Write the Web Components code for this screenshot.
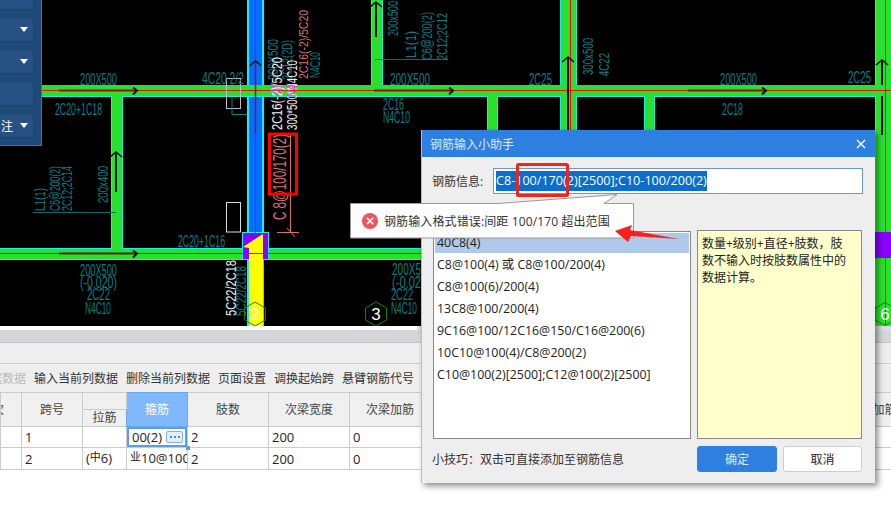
<!DOCTYPE html>
<html lang="zh">
<head>
<meta charset="utf-8">
<title>钢筋输入小助手</title>
<style>
html,body{margin:0;padding:0;background:#fff}
body{width:891px;height:511px;overflow:hidden;font:12px "Open Sans","Noto Sans CJK SC",sans-serif;color:#333}
app-shell{width:891px;height:511px}
</style>
</head>
<body>
<app-shell>
  <cad-canvas slot="canvas"></cad-canvas>
  <side-panel slot="canvas"></side-panel>
  <rebar-grid slot="grid"></rebar-grid>
  <rebar-dialog slot="over">
    <span slot="title">钢筋输入小助手</span>
    <hint-item selected>40C8(4)</hint-item>
    <hint-item>C8@100(4) 或 C8@100/200(4)</hint-item>
    <hint-item>C8@100(6)/200(4)</hint-item>
    <hint-item>13C8@100/200(4)</hint-item>
    <hint-item>9C16@100/12C16@150/C16@200(6)</hint-item>
    <hint-item>10C10@100(4)/C8@200(2)</hint-item>
    <hint-item>C10@100(2)[2500];C12@100(2)[2500]</hint-item>
    <span slot="note">数量+级别+直径+肢数，肢<br>数不输入时按肢数属性中的<br>数据计算。</span>
    <span slot="tip">小技巧：双击可直接添加至钢筋信息</span>
    <dlg-button slot="actions" primary>确定</dlg-button>
    <dlg-button slot="actions">取消</dlg-button>
  </rebar-dialog>
  <error-bubble slot="over">钢筋输入格式错误:间距 100/170 超出范围</error-bubble>
  <red-arrow slot="over"></red-arrow>
</app-shell>
<script>
const CJK='"Open Sans","Noto Sans CJK SC",sans-serif';
function def(name,html,init){
  customElements.define(name,class extends HTMLElement{
    constructor(){super();this.attachShadow({mode:'open'}).innerHTML=html;if(init)init(this.shadowRoot,this)}
  });
}
def('app-shell',`<style>
:host{display:block;position:relative;overflow:hidden}
.top{height:326px;position:relative;overflow:hidden;background:#000}
</style><div class="top"><slot name="canvas"></slot></div><slot name="grid"></slot><slot name="over"></slot>`);

/* ---------- CAD drawing ---------- */
def('cad-canvas',`<style>:host{display:block;width:891px;height:326px}svg{display:block}
text{font-family:"Liberation Sans",sans-serif}</style><svg width="891" height="326" viewBox="0 0 891 326"></svg>`,root=>{
  const G='#2ae02e',C='#14f0e6',TEAL='#0a7f86',WH='#f2f2f2',PK='#d87272',R='#ff0000';
  let s='';
  const rect=(x,y,w,h,f)=>s+=`<rect x="${x}" y="${y}" width="${w}" height="${h}" fill="${f}"/>`;
  const line=(a,b,c,d,col,w=1)=>s+=`<line x1="${a}" y1="${b}" x2="${c}" y2="${d}" stroke="${col}" stroke-width="${w}"/>`;
  const txt=(t,x,y,len,col=TEAL,fs=16)=>s+=`<text x="${x}" y="${y}" font-size="${fs}" fill="${col}" textLength="${len}" lengthAdjust="spacingAndGlyphs">${t}</text>`;
  const vtxt=(t,x,y,len,col=TEAL,fs=15)=>s+=`<text x="${x}" y="${y}" font-size="${fs}" fill="${col}" textLength="${len}" lengthAdjust="spacingAndGlyphs" transform="rotate(-90 ${x} ${y})">${t}</text>`;
  const chevR=(x,y)=>s+=`<polyline points="${x-4},${y-3} ${x},${y} ${x-4},${y+4}" fill="none" stroke="#111" stroke-width="2"/>`;
  const chevU=(x,y)=>s+=`<polyline points="${x-6},${y+5} ${x},${y} ${x+6},${y+5}" fill="none" stroke="#111" stroke-width="1.6"/>`;

  /* blue column */
  rect(247,0,17,233,C);rect(249,0,13,233,'#0a6cff');
  /* outlines first, then fills, so joints merge */
  const verts=[[111,90,12,165],[371,0,12,90],[487,90,11,60],[644,90,11,60],[560,0,17,150],[875,0,17,326]];
  const hor=[[41,85,850,12],[0,248,891,12]];
  verts.forEach(v=>rect(v[0],v[1],v[2],v[3],C));
  hor.forEach(h=>rect(h[0],h[1],h[2],h[3],C));
  verts.forEach(v=>rect(v[0]+1,v[1],v[2]-2,v[3],G));
  rect(41,85,850,11,G);rect(0,249,891,10,G);

  /* purple + yellow column heads */
  rect(242,232,27,27,C);rect(243,233,25,26,'#8a00ff');
  rect(875,232,16,26,'#8a00ff');
  rect(247,259,17,67,C);
  s+=`<polygon points="243,247 263,234 263,326 249,326 249,248" fill="#ffff00"/>`;

  /* red axes */
  line(0,253.5,891,253.5,'#e01010');line(41,90.5,891,90.5,'#e01010');
  line(255.5,0,255.5,236,'#e01010');line(570.5,0,570.5,140,R);line(885.5,0,885.5,326,R);
  /* direction arrows */
  line(59,90.5,135,90.5,'#a80808',2);chevR(137,90.5);
  line(59,253.5,135,253.5,'#5a2020',2);chevR(137,253.5);
  line(374,90.5,452,90.5,'#a80808',2);chevR(453,90.5);
  line(688,90.5,765,90.5,'#a80808',2);chevR(766,90.5);
  line(255.5,62,255.5,134,'#7a2030',1.5);chevU(255.5,61);
  line(116,153,116,192,'#111',2);chevU(116,152);
  line(376,2,376,37,'#111',2);chevU(376,2);
  line(568,58,568,140,'#111',2);chevU(568,57);
  line(882,61,882,85,'#111',2);line(882,96,882,135,'#111',2);chevU(882,60);

  /* boxes */
  s+=`<rect x="226.5" y="78.5" width="14" height="30" fill="none" stroke="#bbb"/><rect x="226.5" y="202.5" width="14" height="29.5" fill="none" stroke="#ddd"/>`;
  s+=`<polyline points="232,97 232,114.5 247,114.5" fill="none" stroke="${TEAL}"/>`;
  line(33,212.5,116,212.5,'#0a6a6e');line(375,59.5,448,59.5,'#0a6a6e');

  /* horizontal notes */
  txt('200X500',80,85,37);txt('4C20 2/2',202,84,42);txt('2C20+1C18',55,115,47);
  txt('2C16',383,110,21);txt('N4C10',383,123,27);
  txt('200X500',390,85,40);txt('2C25',529,85,23);
  txt('200X500',720,85,37);txt('2C18',722,115,21);txt('2C25',848,83,23);
  txt('200X500',80,276,37);txt('(-0.020)',80,288,37);txt('2C22',87,300,23);txt('N4C10',85,314,26);
  txt('2C20+1C16',178,247,47);
  txt('200X5',392,275,29);txt('(-0.02',392,288,29);txt('2C22',391,300,22);txt('N4C10',391,314,26);
  /* vertical notes */
  vtxt('200X500',278,80,41);vtxt('2C16(-2)/5C20',282,130,73,WH,14);vtxt('2C12(2D)',292,80,40);
  vtxt('300*500*N4C10',297,130,70,WH,14);vtxt('-2)',282,97,12,'#e040e0',14);vtxt('N4',297,97,12,'#e040e0',14);
  vtxt('2C16(-2)/5C20',308,79,69,PK,13);vtxt('N4C10',320,78,26);
  vtxt('200x500',398,36,35);vtxt('L1(1)',416,58,27);vtxt('C6@200(2)',432,60,48);vtxt('2C12;2C12',447,60,47);
  vtxt('300x500',593,75,37);vtxt('4C22',609,76,23);
  vtxt('200x400',108,203,37);vtxt('L1(1)',45,211,23);vtxt('C6@200(2)',60,211,45);vtxt('2C12;2C14',72,211,45);
  vtxt('5C22/2C18',236,316,56,WH,14);vtxt('5C22/2C18',246,316,50,TEAL,14);
  /* red-boxed stirrup note */
  vtxt('C 8@100/170(2)',286,220,86,PK,18);
  line(290.5,135,290.5,232,PK);line(277,232.5,299,232.5,PK);line(287,228,295,237,PK);
  s+=`<rect x="269.5" y="134" width="27" height="60" fill="none" stroke="#ff0000" stroke-width="3"/>`;
  /* axis markers */
  const hex=(cx,cy,r,col,n)=>{let p=[];for(let i=0;i<6;i++){const a=Math.PI/3*i-Math.PI/2;p.push((cx+r*Math.cos(a)).toFixed(1)+','+(cy+r*Math.sin(a)).toFixed(1))}
    s+=`<polygon points="${p.join(' ')}" fill="none" stroke="${col}"/>`;
    s+=`<text x="${cx}" y="${cy+6}" font-size="17" fill="#fff" text-anchor="middle">${n}</text>`};
  hex(255,314,12,'#0f8a0f','2');hex(376,314,12,'#0f8a0f','3');hex(885,314,11.5,'#0f8a0f','6');
  root.querySelector('svg').innerHTML=s;
});

/* ---------- floating left panel ---------- */
def('panel-row',`<style>
:host{display:flex;align-items:center;justify-content:flex-end;box-sizing:border-box;height:25px;width:34px;background:#265182;border:1px solid #1e4470;border-left:0;border-radius:0 4px 4px 0;color:#fff;font:12px ${CJK}}
.t{flex:1;padding-left:1px}
svg{margin-right:5px}
</style><span class="t"><slot></slot></span><svg width="8" height="5" viewBox="0 0 8 5"><polygon points="0,0 8,0 4,5" fill="#fff"/></svg>`);
def('side-panel',`<style>
:host{position:absolute;left:0;top:-15px;box-sizing:border-box;width:41.5px;height:161px;background:#1f4a78;border-right:1px solid #2e78c0;border-bottom:1px solid #2e78c0;display:flex;flex-direction:column;gap:7px}
</style><panel-row></panel-row><panel-row></panel-row><panel-row></panel-row><panel-row class="plain"></panel-row><panel-row>注</panel-row>`,root=>{
  root.querySelector('.plain').shadowRoot.querySelector('svg').style.display='none';
});

/* ---------- bottom grid ---------- */
def('rebar-grid',`<style>
:host{display:block;width:891px;overflow:hidden;font:12px ${CJK};color:#333}
.strip{height:4px;background:linear-gradient(to right,#fff 417px,#dcdde0 417px)}
.band{height:12px;background:#d4d6da;border-bottom:1px solid #c4c6ca}
.blank{height:20px;background:#eee;border-bottom:1px solid #ccc}
.tools{height:28px;background:#eee;display:flex;align-items:center;gap:8px;white-space:nowrap}
.tools .off{color:#bbb;width:26px;overflow:hidden;direction:rtl}
table{border-collapse:collapse;table-layout:fixed;width:914px}
th,td{border:1px solid #cbcbcb;padding:0;font-weight:400;overflow:hidden;white-space:nowrap;line-height:14px}
th{background:#f0f0f0;color:#444;text-align:center}
tr.h1 th{height:16px}tr.h2 th{height:16px}
td{height:20px;background:#fff;padding-left:3px;font-size:13px;color:#222;line-height:20px}
th.sel{background:#7fb8fb;color:#fff;border-color:#6aa8ef}
td.edit{box-shadow:inset 0 0 0 2px #5b9de8;position:relative;padding-left:5px;overflow:visible}
td.edit .cell{display:flex;align-items:center;justify-content:space-between;padding-right:4px}
.more{display:inline-flex;align-items:center;justify-content:center;gap:2px;width:15px;height:10px;border:1px solid #7fb0e8;border-radius:2px;background:#e4effc}
.more i{width:2px;height:2px;background:#4a8ad8}
.handle{position:absolute;right:-3px;bottom:-3px;width:4px;height:4px;background:#5b9de8}
.sym{font-size:11px;position:relative;top:-2px}
.clip{display:block;overflow:hidden;width:57px}
.stub{display:block;margin-left:-9px;text-align:left}
</style>
<div class="strip"></div><div class="band"></div><div class="blank"></div>
<div class="tools"><span class="off">据数据</span><span>输入当前列数据</span><span>删除当前列数据</span><span>页面设置</span><span>调换起始跨</span><span>悬臂钢筋代号</span></div>
<table>
<colgroup><col style="width:21px"><col style="width:61px"><col style="width:44px"><col style="width:61px"><col style="width:81px"><col style="width:81px"><col style="width:81px"><col style="width:401px"><col style="width:82px"></colgroup>
<tr class="h1"><th rowspan="2"><span class="stub">次</span></th><th rowspan="2">跨号</th><th></th><th rowspan="2" class="sel">箍筋</th><th rowspan="2">肢数</th><th rowspan="2">次梁宽度</th><th rowspan="2">次梁加筋</th><th rowspan="2"></th><th rowspan="2">次梁加筋</th></tr>
<tr class="h2"><th>拉筋</th></tr>
<tr><td></td><td>1</td><td></td><td class="edit"><div class="cell"><span>00(2)</span><span class="more"><i></i><i></i><i></i></span></div><span class="handle"></span></td><td>2</td><td>200</td><td>0</td><td></td><td></td></tr>
<tr><td></td><td>2</td><td>(<span class="sym">中</span>6)</td><td><span class="clip"><span class="sym">业</span>10@100</span></td><td>2</td><td>200</td><td>0</td><td></td><td></td></tr>
</table>`);

/* ---------- dialog ---------- */
def('hint-item',`<style>
:host{display:block;height:22px;padding-left:2px;font:12.4px/22px ${CJK};color:#222;white-space:nowrap}
:host([selected]){background:#afc9ea;height:20px;line-height:20px;margin-bottom:1px}
</style><slot></slot>`);
def('dlg-button',`<style>
:host{display:flex;align-items:center;justify-content:center;box-sizing:border-box;width:79px;height:26px;border-radius:3px;border:1px solid #ccc;background:#fff;color:#222;font:12px ${CJK}}
:host([primary]){width:80px;background:#2e80e0;border-color:#2e80e0;color:#dfeafa}
</style><slot></slot>`);
def('rebar-dialog',`<style>
:host{position:absolute;left:421px;top:130px;width:454px;height:353px;box-sizing:border-box;background:#eee;border-left:1px solid #b8bcc4;box-shadow:3px 3px 6px rgba(0,0,0,.45);font:12px ${CJK};color:#333;display:flex;flex-direction:column}
.title{height:27px;flex:none;background:#2e80e0;color:#dde8f6;display:flex;align-items:center;justify-content:space-between;padding:0 9px 0 8px}
.field{display:flex;align-items:center;margin:11px 12px 0 10px;height:26px;gap:10px}
.label{width:51px;white-space:nowrap}
.input{flex:1;box-sizing:border-box;height:26px;background:#fff;border:1px solid #6e96d5;padding:2px 2px;font:12.6px/20px ${CJK};white-space:nowrap}
.input span{display:inline-block;background:#0a6ecf;color:#fff;height:20px}
.mid{display:flex;gap:6px;margin:37px 13px 0 11px;height:208px}
.list{box-sizing:border-box;width:258px;background:#fff;border:1px solid #888;padding:1px;overflow:hidden}
.note{box-sizing:border-box;flex:1;background:#ffc;border:1px solid #888;padding:4px 4px;line-height:17px;color:#222;margin-top:-1px}
.foot{display:flex;align-items:center;margin:7px 13px 0 10px;height:26px;gap:6px}
.tip{width:259px;white-space:nowrap}
</style>
<div class="title"><slot name="title"></slot><svg width="10" height="10" viewBox="0 0 10 10"><path d="M1 1L9 9M9 1L1 9" stroke="#fff" stroke-width="1.4" fill="none"/></svg></div>
<div class="field"><span class="label">钢筋信息:</span><div class="input"><span>C8-100/170(2)[2500];C10-100/200(2)</span></div></div>
<div class="mid"><div class="list"><slot></slot></div><div class="note"><slot name="note"></slot></div></div>
<div class="foot"><div class="tip"><slot name="tip"></slot></div><slot name="actions"></slot></div>`);

/* ---------- error bubble + annotations over everything ---------- */
def('error-bubble',`<style>
:host{position:absolute;left:350px;top:194px;width:285px;height:45px;font:12px ${CJK};color:#333;white-space:nowrap}
svg{position:absolute;left:0;top:0}
.row{position:absolute;left:12px;top:18px;height:18px;display:flex;align-items:center;gap:6px;letter-spacing:.12px}
</style>
<svg width="285" height="45" viewBox="0 0 285 45"><path d="M.5 9.5H148L267 .5L254 9.5H283.5V44H.5Z" fill="#fdfdfd" stroke="#9a9a9a"/></svg>
<div class="row"><svg style="position:static" width="16" height="16" viewBox="0 0 16 16"><circle cx="8" cy="8" r="8" fill="#f0535a"/><path d="M4.8 4.8L11.2 11.2M11.2 4.8L4.8 11.2" stroke="#fff" stroke-width="1.6"/></svg><span><slot></slot></span></div>`);
def('red-arrow',`<style>:host{position:absolute;left:516px;top:163px;width:170px;height:85px}svg{position:absolute;left:0;top:0}</style>
<svg width="170" height="85" viewBox="516 163 170 85"><rect x="517.5" y="164.5" width="50" height="31" rx="1" fill="none" stroke="#f0261e" stroke-width="3"/><polygon points="615,231 632,225 630,230 679,239 631,236 628,242" fill="#f9201f"/></svg>`);
</script>
</body>
</html>
